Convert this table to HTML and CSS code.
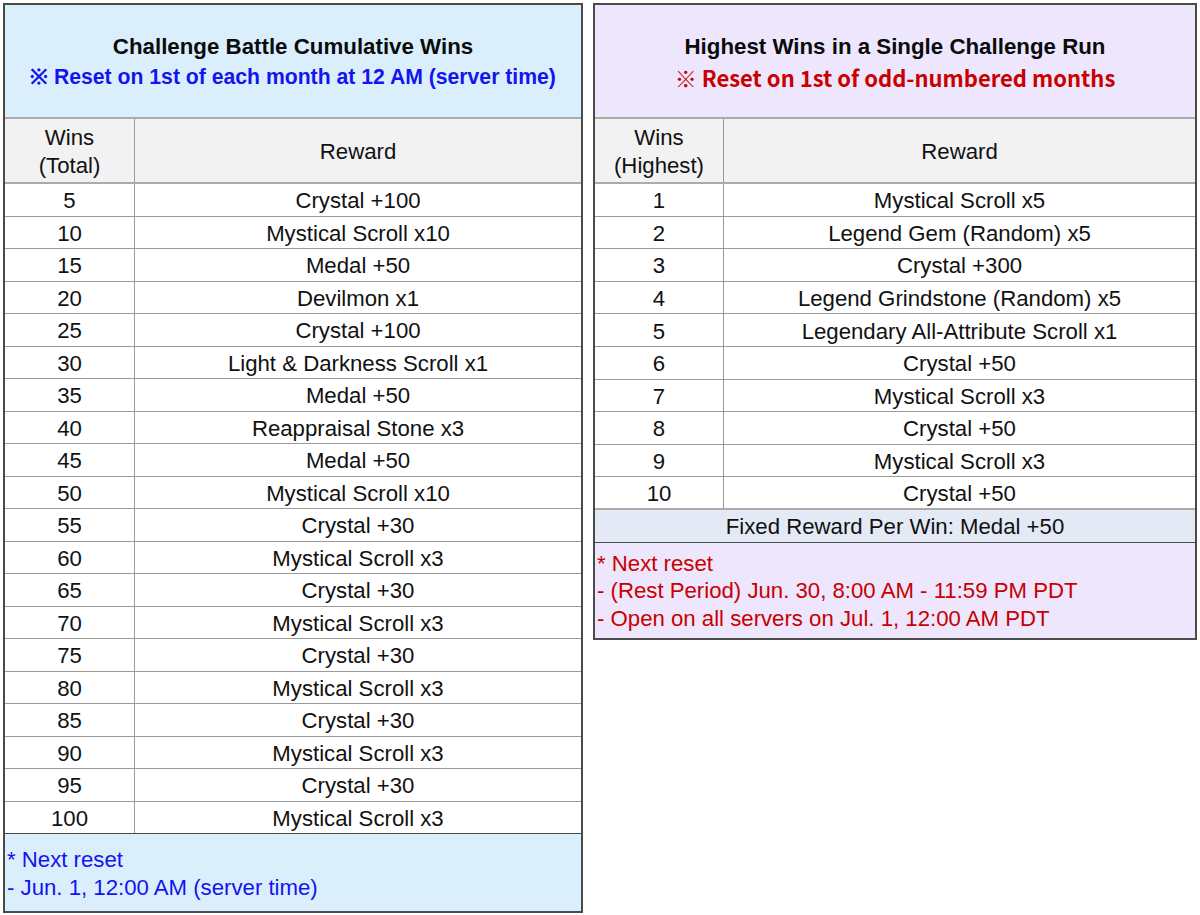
FILE: index.html
```html
<!DOCTYPE html>
<html>
<head>
<meta charset="utf-8">
<link rel="stylesheet" href="styles.css">
</head>
<body>
<div class="page">
  <section class="panel panel-left">
    <div class="head">
      <div class="title">Challenge Battle Cumulative Wins</div>
      <div class="sub sub-blue">※ Reset on 1st of each month at 12 AM (server time)</div>
    </div>
    <div class="row hdr"><div class="c1">Wins<br>(Total)</div><div class="c2">Reward</div></div>
    <div class="row"><div class="c1">5</div><div class="c2">Crystal +100</div></div>
    <div class="row"><div class="c1">10</div><div class="c2">Mystical Scroll x10</div></div>
    <div class="row"><div class="c1">15</div><div class="c2">Medal +50</div></div>
    <div class="row"><div class="c1">20</div><div class="c2">Devilmon x1</div></div>
    <div class="row"><div class="c1">25</div><div class="c2">Crystal +100</div></div>
    <div class="row"><div class="c1">30</div><div class="c2">Light &amp; Darkness Scroll x1</div></div>
    <div class="row"><div class="c1">35</div><div class="c2">Medal +50</div></div>
    <div class="row"><div class="c1">40</div><div class="c2">Reappraisal Stone x3</div></div>
    <div class="row"><div class="c1">45</div><div class="c2">Medal +50</div></div>
    <div class="row"><div class="c1">50</div><div class="c2">Mystical Scroll x10</div></div>
    <div class="row"><div class="c1">55</div><div class="c2">Crystal +30</div></div>
    <div class="row"><div class="c1">60</div><div class="c2">Mystical Scroll x3</div></div>
    <div class="row"><div class="c1">65</div><div class="c2">Crystal +30</div></div>
    <div class="row"><div class="c1">70</div><div class="c2">Mystical Scroll x3</div></div>
    <div class="row"><div class="c1">75</div><div class="c2">Crystal +30</div></div>
    <div class="row"><div class="c1">80</div><div class="c2">Mystical Scroll x3</div></div>
    <div class="row"><div class="c1">85</div><div class="c2">Crystal +30</div></div>
    <div class="row"><div class="c1">90</div><div class="c2">Mystical Scroll x3</div></div>
    <div class="row"><div class="c1">95</div><div class="c2">Crystal +30</div></div>
    <div class="row row-last"><div class="c1">100</div><div class="c2">Mystical Scroll x3</div></div>
    <div class="foot foot-blue">
      <div>* Next reset</div>
      <div>- Jun. 1, 12:00 AM (server time)</div>
    </div>
  </section>

  <section class="panel panel-right">
    <div class="head">
      <div class="title">Highest Wins in a Single Challenge Run</div>
      <div class="sub sub-red">※ Reset on 1st of odd-numbered months</div>
    </div>
    <div class="row hdr"><div class="c1">Wins<br>(Highest)</div><div class="c2">Reward</div></div>
    <div class="row r2"><div class="c1">1</div><div class="c2">Mystical Scroll x5</div></div>
    <div class="row r2"><div class="c1">2</div><div class="c2">Legend Gem (Random) x5</div></div>
    <div class="row r2"><div class="c1">3</div><div class="c2">Crystal +300</div></div>
    <div class="row r2"><div class="c1">4</div><div class="c2">Legend Grindstone (Random) x5</div></div>
    <div class="row r2"><div class="c1">5</div><div class="c2">Legendary All-Attribute Scroll x1</div></div>
    <div class="row r2"><div class="c1">6</div><div class="c2">Crystal +50</div></div>
    <div class="row r2"><div class="c1">7</div><div class="c2">Mystical Scroll x3</div></div>
    <div class="row r2"><div class="c1">8</div><div class="c2">Crystal +50</div></div>
    <div class="row r2"><div class="c1">9</div><div class="c2">Mystical Scroll x3</div></div>
    <div class="row r2 row-pre"><div class="c1">10</div><div class="c2">Crystal +50</div></div>
    <div class="fixed">Fixed Reward Per Win: Medal +50</div>
    <div class="foot foot-red">
      <div>* Next reset</div>
      <div>- (Rest Period) Jun. 30, 8:00 AM - 11:59 PM PDT</div>
      <div>- Open on all servers on Jul. 1, 12:00 AM PDT</div>
    </div>
  </section>
</div>
</body>
</html>
```

FILE: styles.css
```css
html, body {
  margin: 0;
  padding: 0;
  background: #ffffff;
}

body {
  font-family: "Liberation Sans", Arial, sans-serif;
  color: #111111;
}

.page {
  display: flex;
  align-items: flex-start;
  gap: 10px;
  padding: 3px 3px 0 3px;
}

.panel {
  border: 2px solid #4a4a4a;
  box-sizing: border-box;
  display: flex;
  flex-direction: column;
}

.panel-left {
  width: 580px;
}

.panel-right {
  width: 604px;
}

.head {
  height: 114px;
  box-sizing: border-box;
  border-bottom: 2px solid #ababab;
  display: flex;
  flex-direction: column;
  justify-content: center;
  align-items: center;
  text-align: center;
  padding-top: 1px;
}

.panel-left .head,
.foot-blue {
  background: #daeffb;
}

.panel-right .head,
.foot-red {
  background: #ede6fd;
}

.title {
  font-weight: 700;
  font-size: 22.3px;
  line-height: 30px;
  color: #0b0b0b;
}

.sub {
  font-weight: 700;
  line-height: 30px;
}

.sub-blue {
  color: #1414f0;
  font-size: 21.2px;
}

.sub-red {
  color: #c80000;
  font-family: "Noto Sans CJK KR", "Noto Sans", sans-serif;
  font-size: 22px;
}

.row {
  display: flex;
  height: 32.5px;
  box-sizing: border-box;
  border-bottom: 1px solid #9a9a9a;
  font-size: 22.2px;
  line-height: 26px;
}

.r2 {
  height: 32.6px;
}

.row .c1,
.row .c2 {
  display: flex;
  align-items: center;
  justify-content: center;
  text-align: center;
  padding-top: 3px;
  box-sizing: border-box;
}

.row .c1 {
  width: 130px;
  flex: none;
  border-right: 1.5px solid #9a9a9a;
}

.row .c2 {
  flex: 1;
}

.hdr {
  height: 65px;
  background: #f2f2f2;
  border-bottom: 2px solid #ababab;
  line-height: 28px;
}

.panel-right .hdr .c1,
.panel-right .r2 .c1 {
  width: 129px;
}

.row-last {
  border-bottom: 1.5px solid #4a4a4a;
}

.row-pre {
  border-bottom: 2px solid #ababab;
}

.fixed {
  height: 33px;
  box-sizing: border-box;
  background: #e4eaf5;
  border-bottom: 1.5px solid #4a4a4a;
  display: flex;
  align-items: center;
  justify-content: center;
  padding-top: 2px;
  font-size: 22.2px;
  color: #111111;
}

.foot {
  font-size: 22.2px;
  box-sizing: border-box;
  padding-left: 2px;
}

.foot-blue {
  color: #1414f0;
  height: 77px;
  padding-top: 12px;
  line-height: 28px;
}

.foot-red {
  color: #c80000;
  height: 95px;
  padding-top: 7px;
  line-height: 27.5px;
}
```
